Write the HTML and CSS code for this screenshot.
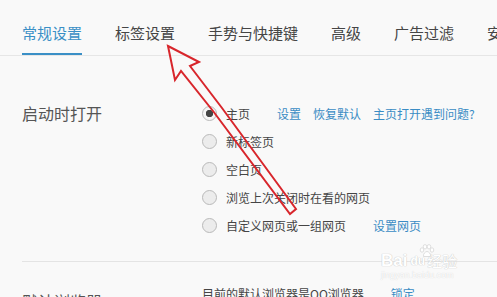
FILE: index.html
```html
<!DOCTYPE html>
<html lang="zh-CN">
<head>
<meta charset="utf-8">
<title>设置</title>
<link rel="stylesheet" href="styles.css">
</head>
<body>
<div class="page">
  <nav class="tabs">
    <span class="tab active">常规设置</span>
    <span class="tab">标签设置</span>
    <span class="tab">手势与快捷键</span>
    <span class="tab">高级</span>
    <span class="tab">广告过滤</span>
    <span class="tab">安全设置</span>
  </nav>

  <section class="group startup">
    <div class="label">启动时打开</div>
    <div class="options">
      <div class="opt"><span class="radio checked"></span><span>主页</span><a class="link first">设置</a><a class="link">恢复默认</a><a class="link">主页打开遇到问题?</a></div>
      <div class="opt"><span class="radio"></span><span>新标签页</span></div>
      <div class="opt"><span class="radio"></span><span>空白页</span></div>
      <div class="opt"><span class="radio"></span><span>浏览上次关闭时在看的网页</span></div>
      <div class="opt"><span class="radio"></span><span>自定义网页或一组网页</span><a class="link first">设置网页</a></div>
    </div>
  </section>

  <section class="group browser">
    <div class="label">默认浏览器</div>
    <div class="options">
      <div class="opt plain"><span>目前的默认浏览器是QQ浏览器</span><a class="link first">锁定</a></div>
    </div>
  </section>

  <div class="watermark">
    <div class="wm-top"><span class="wm-bai">Bai</span><span class="wm-du">du</span><span class="wm-jy">经验</span></div>
    <div class="wm-url">jingyan.baidu.com</div>
    <svg class="wm-paw" width="16" height="14" viewBox="0 0 16 14"><g fill="#fff" stroke="#d6d6d6" stroke-width="0.8"><ellipse cx="3" cy="6" rx="1.8" ry="2.2"/><ellipse cx="6" cy="2.8" rx="1.8" ry="2.2"/><ellipse cx="10" cy="2.8" rx="1.8" ry="2.2"/><ellipse cx="13" cy="6" rx="1.8" ry="2.2"/><path d="M4.5 12.5 C4 9.5 6.5 7.5 8 7.5 C9.5 7.5 12 9.5 11.5 12.5 Z"/></g></svg>
  </div>

  <svg class="arrow" width="497" height="297" viewBox="0 0 497 297">
    <polygon points="168,46 199,62 190,66 222,108 296,209 290,214 213,111 181,71 175,80" fill="none" stroke="#d8262c" stroke-width="2" stroke-linejoin="miter"/>
  </svg>
</div>
</body>
</html>
```

FILE: styles.css
```css
html, body {
  margin: 0;
  padding: 0;
}
body {
  background: #f9f9f9;
  font-family: "Noto Sans CJK SC", "Microsoft YaHei", "Noto Sans", sans-serif;
  width: 497px;
  height: 297px;
  overflow: hidden;
}
.page {
  position: relative;
  width: 497px;
  height: 297px;
  overflow: hidden;
}
.tabs {
  display: flex;
  gap: 33px;
  padding-left: 22px;
  height: 55px;
  border-bottom: 1px solid #e6e6e6;
  white-space: nowrap;
  overflow: hidden;
}
.tab {
  flex: none;
  box-sizing: border-box;
  height: 55px;
  padding-top: 23px;
  font-size: 15px;
  line-height: 20px;
  color: #454545;
}
.tab.active {
  color: #3a8fc6;
  border-bottom: 2px solid #3a8fc6;
}
.group {
  display: flex;
  margin-left: 22px;
}
.startup {
  padding-top: 43px;
  padding-bottom: 22px;
  border-bottom: 1px solid #e4e4e4;
}
.label {
  flex: none;
  width: 180px;
  font-size: 16px;
  line-height: 28px;
  color: #555;
}
.opt {
  display: flex;
  align-items: center;
  height: 28px;
  font-size: 12px;
  color: #454545;
  white-space: nowrap;
}
.radio {
  flex: none;
  box-sizing: border-box;
  width: 15px;
  height: 15px;
  border-radius: 50%;
  border: 1px solid #b9b9b9;
  background: #ececec;
  margin-right: 9px;
}
.radio.checked {
  background: radial-gradient(circle, #444 0 3.4px, #f5f5f5 4px);
}
.link {
  color: #3a8cc4;
  margin-left: 12px;
  cursor: pointer;
}
.link.first {
  margin-left: 27px;
}
.browser {
  padding-top: 25px;
}
.browser .label {
  line-height: 20px;
  padding-top: 4px;
}
.browser .opt {
  height: 14px;
  line-height: 14px;
}
.watermark {
  position: absolute;
  left: 381px;
  top: 244px;
  width: 92px;
  height: 36px;
  color: #fff;
  font-family: "Liberation Sans", Arial, sans-serif;
  pointer-events: none;
}
.wm-top {
  display: flex;
  align-items: flex-end;
  height: 25px;
  text-shadow: 0 0 1px #c9c9c9, 0 0 1px #c9c9c9;
}
.wm-bai {
  font-size: 17px;
  font-weight: bold;
  line-height: 17px;
}
.wm-du {
  font-size: 12px;
  font-weight: bold;
  line-height: 12px;
  margin-left: 3px;
  margin-bottom: 2px;
}
.wm-jy {
  font-family: "Noto Sans CJK SC", sans-serif;
  font-size: 15px;
  line-height: 17px;
  margin-left: 2px;
}
.wm-url {
  font-size: 9px;
  line-height: 11px;
  margin-top: 1px;
  color: #fff;
  text-shadow: 0 0 1px #c9c9c9;
}
.wm-paw {
  position: absolute;
  left: 38px;
  top: 0;
}
.arrow {
  position: absolute;
  left: 0;
  top: 0;
  pointer-events: none;
}
```
